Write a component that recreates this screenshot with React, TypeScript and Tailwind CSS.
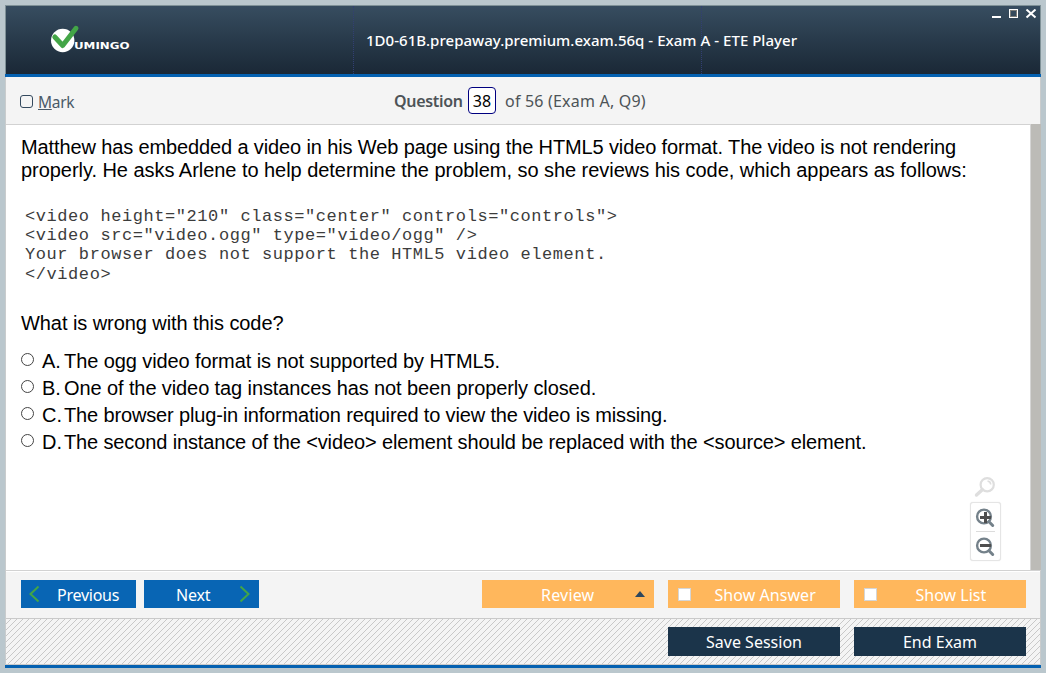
import type { ReactNode } from 'react';

const answers = [
  { letter: 'A.', text: 'The ogg video format is not supported by HTML5.', spacing: 'tracking-[-0.09px]' },
  { letter: 'B.', text: 'One of the video tag instances has not been properly closed.', spacing: 'tracking-[-0.1px]' },
  { letter: 'C.', text: 'The browser plug-in information required to view the video is missing.', spacing: 'tracking-[-0.145px]' },
  { letter: 'D.', text: 'The second instance of the <video> element should be replaced with the <source> element.', spacing: 'tracking-[-0.13px]' },
];

const code = [
  '<video height="210" class="center" controls="controls">',
  '<video src="video.ogg" type="video/ogg" />',
  'Your browser does not support the HTML5 video element.',
  '</video>',
];

function Logo() {
  return (
    <svg width="84" height="30" viewBox="0 0 84 30" className="mt-[18px] ml-[44px] shrink-0">
      <circle cx="12.7" cy="16.5" r="11.7" fill="#fff" />
      <path d="M4.8 13 L12.7 21.5 L26 4.3" fill="none" stroke="#43a547" strokeWidth="5" strokeLinecap="round" strokeLinejoin="round" />
      <text x="24" y="25" fill="#fff" fontFamily="DejaVu Sans" fontWeight="700" fontSize="9.5" textLength="55.5" lengthAdjust="spacingAndGlyphs">UMINGO</text>
    </svg>
  );
}

function WindowControls() {
  return (
    <svg width="48" height="14" viewBox="0 0 48 14" className="mt-[3px] mr-1 shrink-0" fill="none">
      <path d="M3 8 H12" stroke="#fff" strokeWidth="2" />
      <rect x="20.5" y="0.5" width="8" height="8" stroke="#fff" />
      <rect x="21.5" y="1.5" width="6" height="6" stroke="#7c7c78" />
      <path d="M37.5 0.5 L46.5 8.5 M46.5 0.5 L37.5 8.5" stroke="#fff" strokeWidth="2" />
    </svg>
  );
}

function Header() {
  return (
    <header className="flex h-[72px] items-start border-t border-b-[3px] border-t-[#7f9197] border-b-[#0461b1] bg-linear-to-b from-[#374d60] to-[#1a2836]">
      <div className="flex h-full w-[349px] border-r border-dotted border-[#323f73]">
        <div className="h-full w-px bg-[#7f9197]" />
        <Logo />
      </div>
      <div className="flex h-full w-[348px] items-center border-r border-dotted border-[#323f73] pt-px pl-3">
        <h1 className="font-['Noto_Sans'] text-[15px] font-medium tracking-[0.03px] whitespace-nowrap text-white">
          1D0-61B.prepaway.premium.exam.56q - Exam A - ETE Player
        </h1>
      </div>
      <div className="flex h-full flex-1 justify-end">
        <WindowControls />
        <div className="-ml-px h-full w-px bg-[#7f9197]" />
      </div>
    </header>
  );
}

function QuestionBar() {
  return (
    <div className="flex h-12 items-center border-b border-[#d2d2d2] bg-[#f4f4f4] pl-[14px] font-['Noto_Sans'] text-[#4d5357]">
      <label className="flex w-[374px] items-center gap-[5px] pt-[3px] text-base">
        <span className="-mt-[2px] h-[13px] w-[13px] rounded-[3px] border border-[#34495e]" />
        <span className="pt-[2px] text-[15.5px] tracking-[-0.3px] text-[#4a5a68]"><u className="underline-offset-1">M</u>ark</span>
      </label>
      <div className="flex items-center text-base whitespace-nowrap">
        <span className="w-[74px] font-semibold tracking-[-0.3px]">Question</span>
        <span className="flex h-[27px] w-7 items-center justify-center rounded-[4px] border border-[#000080] bg-white text-black">38</span>
        <span className="ml-[9px] tracking-[0.2px]">of 56 (Exam A, Q9)</span>
      </div>
    </div>
  );
}

function ZoomTools() {
  return (
    <div className="absolute top-[351px] left-[964px] flex w-[31px] flex-col items-center">
      <svg width="22" height="22" viewBox="0 0 22 22" fill="none" stroke="#dedede" className="mr-px mb-1">
        <circle cx="13.2" cy="8.7" r="6.6" strokeWidth="2.2" />
        <path d="M8.3 13.7 L2.5 19" strokeWidth="3.4" strokeLinecap="round" />
        <path d="M13.5 5 Q16.7 5.5 16.7 8.5" strokeWidth="1.5" />
      </svg>
      <div className="flex h-[59px] w-[31px] flex-col items-center rounded-[3px] border border-[#e5e5e5] bg-white shadow-[0_0_1px_#ddd]">
        <svg width="21" height="28" viewBox="0 0 21 28" fill="none" stroke="#74818a">
          <circle cx="9" cy="13.5" r="6.9" strokeWidth="2.4" />
          <path d="M14 18.7 L17.7 22.5" strokeWidth="3" strokeLinecap="round" />
          <path d="M5 14.5 H16 M10.5 9 V20" stroke="#4e4e4e" strokeWidth="3" />
        </svg>
        <div className="h-px w-[19px] bg-[#dcdcdc]" />
        <svg width="21" height="28" viewBox="0 0 21 28" fill="none" stroke="#74818a">
          <circle cx="9" cy="13.5" r="6.9" strokeWidth="2.4" />
          <path d="M14 18.7 L17.7 22.5" strokeWidth="3" strokeLinecap="round" />
          <path d="M5 13.5 H16" stroke="#4e4e4e" strokeWidth="3" />
        </svg>
      </div>
    </div>
  );
}

function Exam() {
  return (
    <main className="relative -mr-px flex h-[446px] border-b border-[#d2d2d2] bg-white">
      <div className="flex-1 pt-[11px] pl-[15px] font-['Liberation_Sans'] text-[20px] leading-[23px] whitespace-nowrap text-black">
        <p className="tracking-[-0.124px]">Matthew has embedded a video in his Web page using the HTML5 video format. The video is not rendering</p>
        <p className="tracking-[-0.042px]">properly. He asks Arlene to help determine the problem, so she reviews his code, which appears as follows:</p>
        <div className="mt-[25px] mb-[-1px] ml-1 font-['Liberation_Mono'] text-[17px] leading-[19.2px] tracking-[0.57px] whitespace-pre text-[#3c3c3c]">
          {code.map((line) => <div key={line}>{line}</div>)}
        </div>
        <p className="mt-[29.4px] tracking-[-0.07px]">What is wrong with this code?</p>
        <div className="mt-[13px]">
          {answers.map(({ letter, text, spacing }) => (
            <label key={letter} className="flex h-[27px] items-center">
              <span className="-mt-[5px] mr-[8px] h-[13px] w-[13px] rounded-full border border-[#444]" />
              <span className="w-[22px]">{letter}</span>
              <span className={spacing}>{text}</span>
            </label>
          ))}
        </div>
      </div>
      <div className="-mt-px w-[11px] border-l border-[#d5d5d5] bg-[#bcbbb7]" />
      <ZoomTools />
    </main>
  );
}

function OrangeButton({ children, mark }: { children: ReactNode; mark: boolean }) {
  return (
    <button className="flex h-7 w-[172px] items-center bg-[#ffb75c] pl-[10px] text-white">
      {mark && <span className="h-[13px] w-[13px] border border-[#d5d5d5] bg-white" />}
      {children}
    </button>
  );
}

function Footer() {
  return (
    <footer className="font-['Noto_Sans'] text-base whitespace-nowrap">
      <div className="flex h-12 border-t border-b border-t-white border-b-[#cacaca] bg-[#f4f4f4] pt-2 pl-[15px]">
        <button className="flex h-7 w-[115px] items-center bg-[#0865b4] pl-[7px] text-white">
          <svg width="12" height="18" viewBox="0 0 12 18" fill="none" stroke="#43a547" strokeWidth="2"><path d="M10.5 1.5 L2.5 9 L10.5 16.5" /></svg>
          <span className="ml-[17px] pt-[2px] tracking-[-0.25px]">Previous</span>
        </button>
        <button className="ml-2 flex h-7 w-[115px] items-center bg-[#0865b4] pl-8 text-white">
          <span className="w-[63px] pt-[2px] text-left tracking-[-0.2px]">Next</span>
          <svg width="12" height="18" viewBox="0 0 12 18" fill="none" stroke="#43a547" strokeWidth="2"><path d="M1.5 1.5 L9.5 9 L1.5 16.5" /></svg>
        </button>
        <div className="ml-[223px] flex gap-[14px]">
          <OrangeButton mark={false}>
            <span className="ml-[49px] w-[94px] pt-[2px] text-left tracking-[0.2px]">Review</span>
            <svg width="10" height="6" viewBox="0 0 10 6" fill="#2c465d"><path d="M0 6 L5 0 L10 6 Z" /></svg>
          </OrangeButton>
          <OrangeButton mark><span className="ml-[23.5px] pt-[2px] tracking-[0.05px]">Show Answer</span></OrangeButton>
          <OrangeButton mark><span className="ml-[38.5px] pt-[2px]">Show List</span></OrangeButton>
        </div>
      </div>
      <div className="flex h-[46px] justify-end gap-[14px] border-b border-[#cacaca] bg-[repeating-linear-gradient(135deg,#f4f4f4_0px,#f4f4f4_3.2px,#c8c8c8_3.3px,#c8c8c8_4.2426px)] pt-2 pr-[14px] text-white">
        <button className="h-[29px] w-[172px] bg-[#1b344a] pt-px">Save Session</button>
        <button className="h-[29px] w-[172px] bg-[#1b344a] pt-px">End Exam</button>
      </div>
      <div className="-mx-px h-[3px] bg-[#0461b1]" />
    </footer>
  );
}

export default function App() {
  return (
    <div className="h-[673px] w-[1046px] overflow-hidden bg-[#bac7cd] pt-[5px] pl-[5px]">
      <div className="w-[1036px]">
        <Header />
        <div className="border-x border-[#c9cccd]">
          <QuestionBar />
          <Exam />
          <Footer />
        </div>
      </div>
    </div>
  );
}
